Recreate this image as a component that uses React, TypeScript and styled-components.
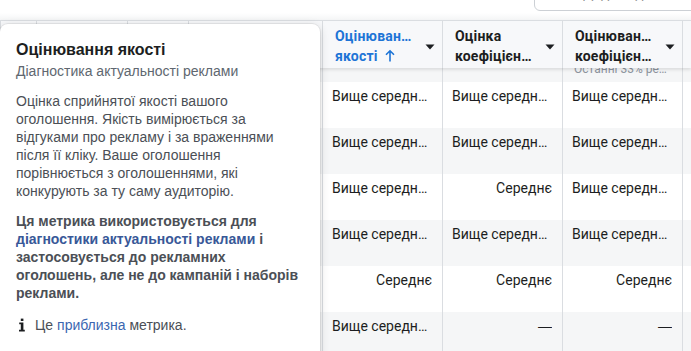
import styled, { createGlobalStyle } from "styled-components";

const GlobalStyle = createGlobalStyle`
  html, body {
    margin: 0;
    padding: 0;
    background: #fff;
    overflow: hidden;
  }
`;

type Cell = { text: string; align?: "left" | "right" };

const COLS = "36px 91px 61px 134px 120px 120px 120px 120px";

const headers = [
  { line1: "Оцінювання", line2: "якості", sorted: true },
  { line1: "Оцінка", line2: "коефіцієнта взаємодії", sorted: false },
  { line1: "Оцінювання", line2: "коефіцієнта конверсій", sorted: false },
];

const above = "Вище середнього";
const avg: Cell = { text: "Середнє", align: "right" };
const dash: Cell = { text: "—", align: "right" };
const hi: Cell = { text: above };

const rows: Cell[][] = [
  [hi, hi, hi],
  [hi, hi, hi],
  [hi, avg, hi],
  [hi, hi, hi],
  [avg, avg, avg],
  [hi, dash, dash],
];

function App() {
  return (
    <Page>
      <GlobalStyle />
      <TopBar>
        <ActionButton>Додати дані</ActionButton>
      </TopBar>
      <Table>
        <HeaderRow>
          <HeadCell />
          <HeadCell />
          <HeadCell />
          <HeadCell />
          {headers.map((h, i) => (
            <HeadCell key={i}>
              <HeadText $active={h.sorted}>
                <HeadLine>{h.line1}</HeadLine>
                <HeadLine>
                  {h.line2}
                  {h.sorted && (
                    <SortArrow width="10" height="13" viewBox="0 0 10 13">
                      <path
                        d="M5 12.5V1.8M1 5.8L5 1.8L9 5.8"
                        fill="none"
                        stroke="currentColor"
                        strokeWidth="1.6"
                      />
                    </SortArrow>
                  )}
                </HeadLine>
              </HeadText>
              <Caret width="10" height="6" viewBox="0 0 10 6">
                <path d="M0.5 0.5H9.5L5 5.5Z" fill="#1c1e21" />
              </Caret>
            </HeadCell>
          ))}
          <HeadCell />
        </HeaderRow>
        <SummaryRow>
          <SumCell />
          <SumCell />
          <SumCell />
          <SumCell />
          <SumCell />
          <SumCell />
          <SumCell>
            <SumText>Останні 33% рекламних оголошень</SumText>
          </SumCell>
          <SumCell />
        </SummaryRow>
        {rows.map((r, i) => (
          <DataRow key={i} $alt={i % 2 === 1}>
            <DataCell />
            <DataCell />
            <DataCell />
            <DataCell />
            {r.map((c, j) => (
              <DataCell key={j} $align={c.align}>
                <CellText $dash={c.text === "—"}>{c.text}</CellText>
              </DataCell>
            ))}
            <DataCell />
          </DataRow>
        ))}
      </Table>

      <Popover>
        <PopTitle>Оцінювання якості</PopTitle>
        <PopSubtitle>Діагностика актуальності реклами</PopSubtitle>
        <PopText>
          Оцінка сприйнятої якості вашого оголошення. Якість вимірюється за
          відгуками про рекламу і за враженнями після її кліку. Ваше оголошення
          порівнюється з оголошеннями, які конкурують за ту саму аудиторію.
        </PopText>
        <PopText $bold>
          Ця метрика використовується для{" "}
          <PopLink href="#">діагностики актуальності реклами</PopLink> і
          застосовується до рекламних оголошень, але не до кампаній і наборів
          реклами.
        </PopText>
        <PopFooter>
          <InfoIcon width="8" height="14" viewBox="0 0 8 14">
            <rect x="2.8" y="0.6" width="2.6" height="2.4" fill="#1c1e21" />
            <path d="M1.2 4.6H5.4V11.8H6.8V13.4H1V11.8H2.8V6.2H1.2Z" fill="#1c1e21" />
          </InfoIcon>
          <FooterText>
            Це <FooterLink href="#">приблизна</FooterLink> метрика.
          </FooterText>
        </PopFooter>
      </Popover>
    </Page>
  );
}

export default App;

const Page = styled.div`
  position: relative;
  width: 691px;
  height: 351px;
  overflow: hidden;
  background: #fff;
  font-family: Roboto, "Noto Sans", sans-serif;
`;

const TopBar = styled.div`
  height: 20px;
  display: flex;
  justify-content: flex-end;
  background: linear-gradient(#fff 0%, #fff 65%, #f4f5f6 100%);
`;

const ActionButton = styled.div`
  box-sizing: border-box;
  width: 180px;
  height: 32px;
  margin-top: -21px;
  margin-right: -23px;
  border: 1px solid #ccd0d5;
  border-radius: 6px;
  background: #fff;
  color: #1c1e21;
  font-size: 14px;
  line-height: 26px;
  padding-left: 48px;
  white-space: nowrap;
`;

const Table = styled.div`
  display: flex;
  flex-direction: column;
  color: #1c1e21;
`;

const HeaderRow = styled.div`
  position: relative;
  z-index: 2;
  display: grid;
  grid-template-columns: ${COLS};
  height: 48px;
  box-sizing: border-box;
  border-top: 1px solid #dadde1;
  background: #f7f8fa;
  box-shadow: 0 2px 3px rgba(0, 0, 0, 0.1);
`;

const HeadCell = styled.div`
  display: flex;
  align-items: flex-start;
  border-left: 1px solid #dadde1;
  padding: 5px 7px 0 12px;
  min-width: 0;
`;

const HeadText = styled.div<{ $active?: boolean }>`
  flex: 1;
  min-width: 0;
  font-weight: 700;
  font-size: 14px;
  line-height: 20px;
  letter-spacing: 0.2px;
  color: ${(p) => (p.$active ? "#1d74d6" : "#1c1e21")};
`;

const HeadLine = styled.div`
  white-space: nowrap;
  overflow: hidden;
  text-overflow: ellipsis;
`;

const SortArrow = styled.svg`
  margin-left: 7px;
  vertical-align: -1px;
`;

const Caret = styled.svg`
  flex-shrink: 0;
  margin: 18px 0 0 8px;
`;

const SummaryRow = styled.div`
  display: grid;
  grid-template-columns: ${COLS};
  height: 14px;
  overflow: hidden;
  background: #f5f6f7;
`;

const SumCell = styled.div`
  border-left: 1px solid #dadde1;
  padding: 0 12px 0 11px;
  min-width: 0;
`;

const SumText = styled.div`
  margin-top: -7px;
  font-size: 12px;
  line-height: 16px;
  color: #8d949e;
  white-space: nowrap;
  overflow: hidden;
  text-overflow: ellipsis;
`;

const DataRow = styled.div<{ $alt?: boolean }>`
  display: grid;
  grid-template-columns: ${COLS};
  height: 46px;
  background: ${(p) => (p.$alt ? "#f5f6f7" : "#fff")};
`;

const DataCell = styled.div<{ $align?: "left" | "right" }>`
  border-left: 1px solid #dadde1;
  padding: 5px 10px 0 9px;
  min-width: 0;
  text-align: ${(p) => p.$align ?? "left"};
`;

const CellText = styled.div<{ $dash?: boolean }>`
  font-size: 14px;
  line-height: 18px;
  font-family: ${(p) => (p.$dash ? '"Liberation Sans", sans-serif' : "inherit")};
  white-space: nowrap;
  overflow: hidden;
  text-overflow: ellipsis;
`;

const Popover = styled.div`
  position: absolute;
  z-index: 5;
  left: 0;
  top: 24px;
  width: 320px;
  height: 360px;
  box-sizing: border-box;
  padding: 16px 16px 0 16px;
  background: #fff;
  border-radius: 8px;
  box-shadow: 0 0 0 1px rgba(0, 0, 0, 0.06), 0 2px 10px rgba(0, 0, 0, 0.16);
  font-family: "Liberation Sans", Arial, sans-serif;
`;

const PopTitle = styled.div`
  font-size: 16px;
  line-height: 20px;
  font-weight: 700;
  color: #1c1e21;
`;

const PopSubtitle = styled.div`
  margin-top: 2px;
  font-size: 14px;
  line-height: 18px;
  color: #606770;
`;

const PopText = styled.p<{ $bold?: boolean }>`
  margin: 12px 0 0;
  font-size: 14px;
  line-height: 18px;
  color: #4b4f56;
  font-weight: ${(p) => (p.$bold ? 700 : 400)};
`;

const PopLink = styled.a`
  color: #385898;
  text-decoration: none;
`;

const PopFooter = styled.div`
  margin-top: 14px;
  display: flex;
  align-items: center;
  gap: 9px;
  padding-left: 2px;
  font-size: 14px;
  line-height: 18px;
  color: #4b4f56;
`;

const FooterText = styled.span`
  color: #4b4f56;
`;

const FooterLink = styled(PopLink)`
  color: #3b66b0;
`;

const InfoIcon = styled.svg`
  flex-shrink: 0;
`;
